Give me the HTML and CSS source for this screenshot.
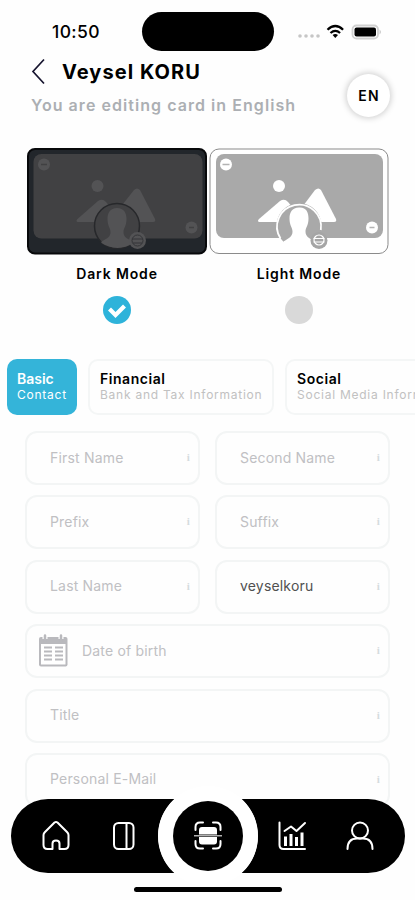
FILE: index.html
```html
<!DOCTYPE html>
<html lang="en">
<head>
<meta charset="utf-8">
<title>Edit card</title>
<link rel="stylesheet" href="styles.css">
</head>
<body>
<div class="screen">
  <div class="status">
    <span class="time">10:50</span>
    <span class="island"></span>
    <svg class="signals" width="86" height="18" viewBox="0 0 86 18">
      <g fill="#c6c6c6"><circle cx="3" cy="13" r="1.800"/><circle cx="9" cy="13" r="1.800"/><circle cx="15" cy="13" r="1.800"/><circle cx="21" cy="13" r="1.800"/></g>
      <g fill="none" stroke="#000" stroke-width="2.300"><path d="M30.500 6.800Q38.300 -.800 46.100 6.800"/><path d="M33.500 10Q38.300 5.800 43.100 10"/></g>
      <path d="M35.600 12Q38.300 9.800 41 12L38.300 15Z"/>
      <rect x="55.500" y="2.500" width="25.500" height="13" rx="4" fill="#fff" stroke="#d0d0d0" stroke-width="1.800"/>
      <rect x="57.500" y="4.500" width="21.500" height="9" rx="2"/>
      <path d="M82.500 6.500Q85.500 9 82.500 11.500Z" fill="#c9c9c9"/>
    </svg>
  </div>

  <header class="header">
    <div class="heading">
      <svg class="back" width="15" height="27" viewBox="0 0 15 27"><path d="M13 1.500L2 13.500L13 25.500" fill="none" stroke="#17152f" stroke-width="1.700"/></svg>
      <h1>Veysel KORU</h1>
    </div>
    <p class="subtitle">You are editing card in English</p>
    <button class="lang">EN</button>
  </header>

  <div class="modes">
    <div class="mode">
      <svg width="180" height="107" viewBox="0 0 180 107">
        <rect x="1" y="1" width="178" height="104.500" rx="7" fill="#22262b" stroke="#08090b" stroke-width="2"/>
        <rect x="6.500" y="6" width="169" height="84.500" rx="8" fill="#414143"/>
        <g fill="#535355"><circle cx="17" cy="16.500" r="6"/><circle cx="164.500" cy="79.500" r="6"/><circle cx="70.500" cy="38" r="6"/><path d="M50.500 74Q48.500 73 50.500 71L71 53Q75.500 50 79 54L85 61L90 74Z"/><path d="M96 56L107 42Q110 39 113 42L128 71Q129 74 126 74H100Z"/></g>
        <path d="M14 16.500h6M162 79.500h5" stroke="#404042" stroke-width="1.500"/>
        <circle cx="90" cy="78" r="22.500" fill="#414143" stroke="#27282b" stroke-width="1.500"/>
        <path d="M90 60c-7 0-9.500 5-9.500 11 0 7 3 9 3 13 0 5-3 6-8 9q-2 1-1 2c8 6 23 7 31 0q1-1-1-2c-5-3-8-4-8-9 0-4 3-6 3-13 0-6-2.500-11-9.500-11Z" fill="#535355"/>
        <circle cx="110.500" cy="92.500" r="8.500" fill="#535355"/><g fill="none" stroke="#343538"><circle cx="110.500" cy="92.500" r="5.500"/><path d="M105 91h11M106 95h9"/></g>
      </svg>
      <span class="mode-name">Dark Mode</span>
      <svg width="28" height="28" viewBox="0 0 28 28"><circle cx="14" cy="14" r="14" fill="#2eb3da"/><path d="M6.500 13L12.500 19L21.500 10" fill="none" stroke="#fff" stroke-width="4.200"/></svg>
    </div>
    <div class="mode">
      <svg width="180" height="107" viewBox="0 0 180 107">
        <rect x="1" y="1" width="178" height="104.500" rx="9" fill="#fff" stroke="#8b8b8b" stroke-width="1"/>
        <rect x="7" y="6" width="167" height="84" rx="8" fill="#a9a9a9"/>
        <g fill="#fff"><circle cx="17" cy="16.500" r="6"/><circle cx="163" cy="79.500" r="6"/><circle cx="70" cy="38" r="6"/><path d="M50 74Q48 73 50 71L71 53Q75.500 50 79 54L85 61L90 74Z"/><path d="M94 58L106 42Q109.500 39 112 42L127 71Q128 74 125 74H100Z"/></g>
        <path d="M13.500 16.500h7M160.500 79.500h5" stroke="#b3b3b3" stroke-width="1.500"/>
        <path d="M75.200 94.500A22.500 22.500 0 1 1 105.500 94Z" fill="#a9a9a9"/>
        <path d="M71.500 90.500A22 22 0 1 1 111.800 82" fill="none" stroke="#fff" stroke-width="1.800"/>
        <path d="M90 59.500c-7 0-9.500 5-9.500 11 0 7 3 9 3 13 0 5-3 6-9 10v6h31v-6c-6-4-9-5-9-10 0-4 3-6 3-13 0-6-2-11-8.500-11Z" fill="#fff"/>
        <circle cx="110" cy="92.500" r="8.500" fill="#a5a5a5"/><g fill="none" stroke="#fff" stroke-width="1.200"><circle cx="110" cy="92" r="5"/><path d="M104.500 90.500h11M104.500 94h11"/></g>
      </svg>
      <span class="mode-name">Light Mode</span>
      <svg width="28" height="28" viewBox="0 0 28 28"><circle cx="14" cy="14" r="14" fill="#d9d9d9"/></svg>
    </div>
  </div>

  <div class="tabs">
    <div class="tab active"><strong>Basic</strong><span>Contact</span></div>
    <div class="tab"><strong>Financial</strong><span>Bank and Tax Information</span></div>
    <div class="tab"><strong>Social</strong><span>Social Media Information</span></div>
  </div>

  <div class="form">
    <div class="field"><span>First Name</span><i>i</i></div>
    <div class="field"><span>Second Name</span><i>i</i></div>
    <div class="field"><span>Prefix</span><i>i</i></div>
    <div class="field"><span>Suffix</span><i>i</i></div>
    <div class="field"><span>Last Name</span><i>i</i></div>
    <div class="field filled"><span>veyselkoru</span><i>i</i></div>
    <div class="field wide date">
      <svg width="30" height="33" viewBox="0 0 30 33"><rect x="1" y="3" width="28.500" height="29.500" rx="2" fill="#b9b9bd"/><path d="M3 10H27.500V30.500H3Z" fill="#fff"/><path d="M7 0v5M23 0v5" stroke="#fff" stroke-width="5"/><path d="M7 1.500v5M23 1.500v5" stroke="#b9b9bd" stroke-width="2.500" stroke-linecap="round"/><path d="M6 13.500h8M17 13.500h8M6 17.500h8M17 17.500h8M6 21.500h8M17 21.500h8M6 25.500h8M17 25.500h8" stroke="#b9b9bd" stroke-width="2"/></svg>
      <span>Date of birth</span><i>i</i></div>
    <div class="field wide"><span>Title</span><i>i</i></div>
    <div class="field wide"><span>Personal E-Mail</span><i>i</i></div>
  </div>

  <nav class="nav">
    <svg width="394" height="76" viewBox="0 0 394 76">
      <path d="M37 1H163.500A50 50 0 0 0 163.500 75H37A37 37 0 0 1 37 1ZM230.500 1H357A37 37 0 0 1 357 75H230.500A50 50 0 0 0 230.500 1Z"/>
      <circle cx="197" cy="38" r="50" fill="#fff"/>
      <circle cx="197" cy="38" r="35"/>
      <g fill="none" stroke="#fff" stroke-width="2" stroke-linejoin="round" stroke-linecap="round">
        <path d="M43.500 24.500Q45 23.500 46.500 24.500L56 34Q57.500 35.500 57.500 37V47Q57.500 51 53.500 51H48.500V45.500Q48.500 42.500 45 42.500T41.500 45.500V51H36.500Q32.500 51 32.500 47V37Q32.500 35.500 34 34Z"/>
        <rect x="103" y="25" width="19.500" height="26" rx="4.500"/><path d="M115.500 25V51"/>
        <path d="M192 24.500H189Q184.500 24.500 184.500 29V32M202 24.500H205Q209.500 24.500 209.500 29V32M192 50.500H189Q184.500 50.500 184.500 46V43M202 50.500H205Q209.500 50.500 209.500 46V43"/>
        <path d="M263.500 24.500V47Q263.500 51 267.500 51H289M268.500 33L275 28.500L280.500 33L289 25" transform="translate(5)"/>
        <circle cx="349" cy="32.500" r="8"/><path d="M336.500 51Q336.500 40.500 346 40.500H352Q361.500 40.500 361.500 51"/>
      </g>
      <path d="M188 36.500V32Q188 29 191 29H203Q206 29 206 32V36.500ZM188 39V43.500Q188 46.500 191 46.500H203Q206 46.500 206 43.500V39Z" fill="#fff"/>
      <path d="M183 37.800H211" stroke="#ddd" stroke-width="1.200"/>
      <path d="M274.500 38.500V48M280 36V48M285.500 39V48M291 34.500V48" stroke="#fff" stroke-width="3"/>
    </svg>
  </nav>
  <div class="home-bar"></div>
</div>
</body>
</html>
```

FILE: styles.css
```css
* { box-sizing: border-box; }
body { margin: 0; background: #fefefe; font-family: Inter, "Liberation Sans", sans-serif; color: #000; }
.screen { position: relative; width: 415px; height: 900px; overflow: hidden; }

.status { height: 52px; display: flex; align-items: center; padding-top: 11px; }
.time { width: 90px; margin-left: 52px; font-size: 17.500px; font-weight: 500; letter-spacing: .4px; }
.island { width: 132px; height: 39px; border-radius: 20px; background: #000; }
.signals { margin-left: 23px; }

.header { position: relative; height: 96px; padding-left: 31px; }
.heading { display: flex; align-items: center; height: 39px; gap: 16px; }
h1 { margin: 0; font-size: 20px; line-height: 24px; font-weight: 700; letter-spacing: 1.050px; white-space: nowrap; }
.subtitle { margin: 4px 0 0; font-size: 16px; line-height: 20px; font-weight: 600; color: #acafb3; letter-spacing: 1.050px; white-space: nowrap; }
.lang { position: absolute; left: 347px; top: 22px; width: 43px; height: 43px; padding: 0; border: 0; border-radius: 50%; background: #fff; box-shadow: 0 0 6px 1px #ccc; font: 600 14px Inter, sans-serif; letter-spacing: 1.200px; text-indent: 1px; color: #000; }

.modes { display: flex; gap: 2px; padding-left: 27px; height: 211px; }
.mode { display: flex; flex-direction: column; align-items: center; width: 180px; }
.mode > svg { flex: none; }
.mode-name { height: 41px; line-height: 37px; font-size: 14px; font-weight: 600; letter-spacing: .850px; }

.tabs { display: flex; gap: 11px; padding-left: 7px; height: 72px; }
.tab { flex: none; width: 186px; height: 56px; padding: 9px 0 0 10px; border: 2px solid #f4f6f6; border-radius: 10px; display: flex; flex-direction: column; white-space: nowrap; }
.tab.active { width: 70px; padding-left: 10px; border: 0; padding-top: 11px; background: #34b4d9; }
.tab strong { font-size: 14px; line-height: 17px; font-weight: 600; letter-spacing: .550px; }
.tab span { font-size: 12px; line-height: 16px; color: #c1c1c1; letter-spacing: .750px; }
.tab.active strong { letter-spacing: 0; }
.tab.active strong, .tab.active span { color: #fff; }

.form { display: grid; grid-template-columns: 175px 175px; grid-auto-rows: 54px; gap: 10.400px 15px; padding-left: 25px; }
.field { display: flex; align-items: center; justify-content: space-between; padding: 0 8px 2px 23px; border: 2px solid #f3f5f5; border-radius: 12px; font-size: 14px; letter-spacing: .180px; color: #c0c0c3; }
.wide { grid-column: span 2; }
.field i { font: 700 11px "Liberation Serif", serif; color: #d5dcde; }
.filled > span { color: #505050; }
.date { padding-left: 11px; }
.date svg { margin-right: 14px; }
.date > span { flex: 1; }

.nav { position: absolute; left: 11px; top: 798px; width: 394px; height: 76px; }
.nav svg { display: block; overflow: visible; }
.home-bar { position: absolute; left: 134px; top: 887px; width: 148px; height: 5px; border-radius: 3px; background: #000; }
```
